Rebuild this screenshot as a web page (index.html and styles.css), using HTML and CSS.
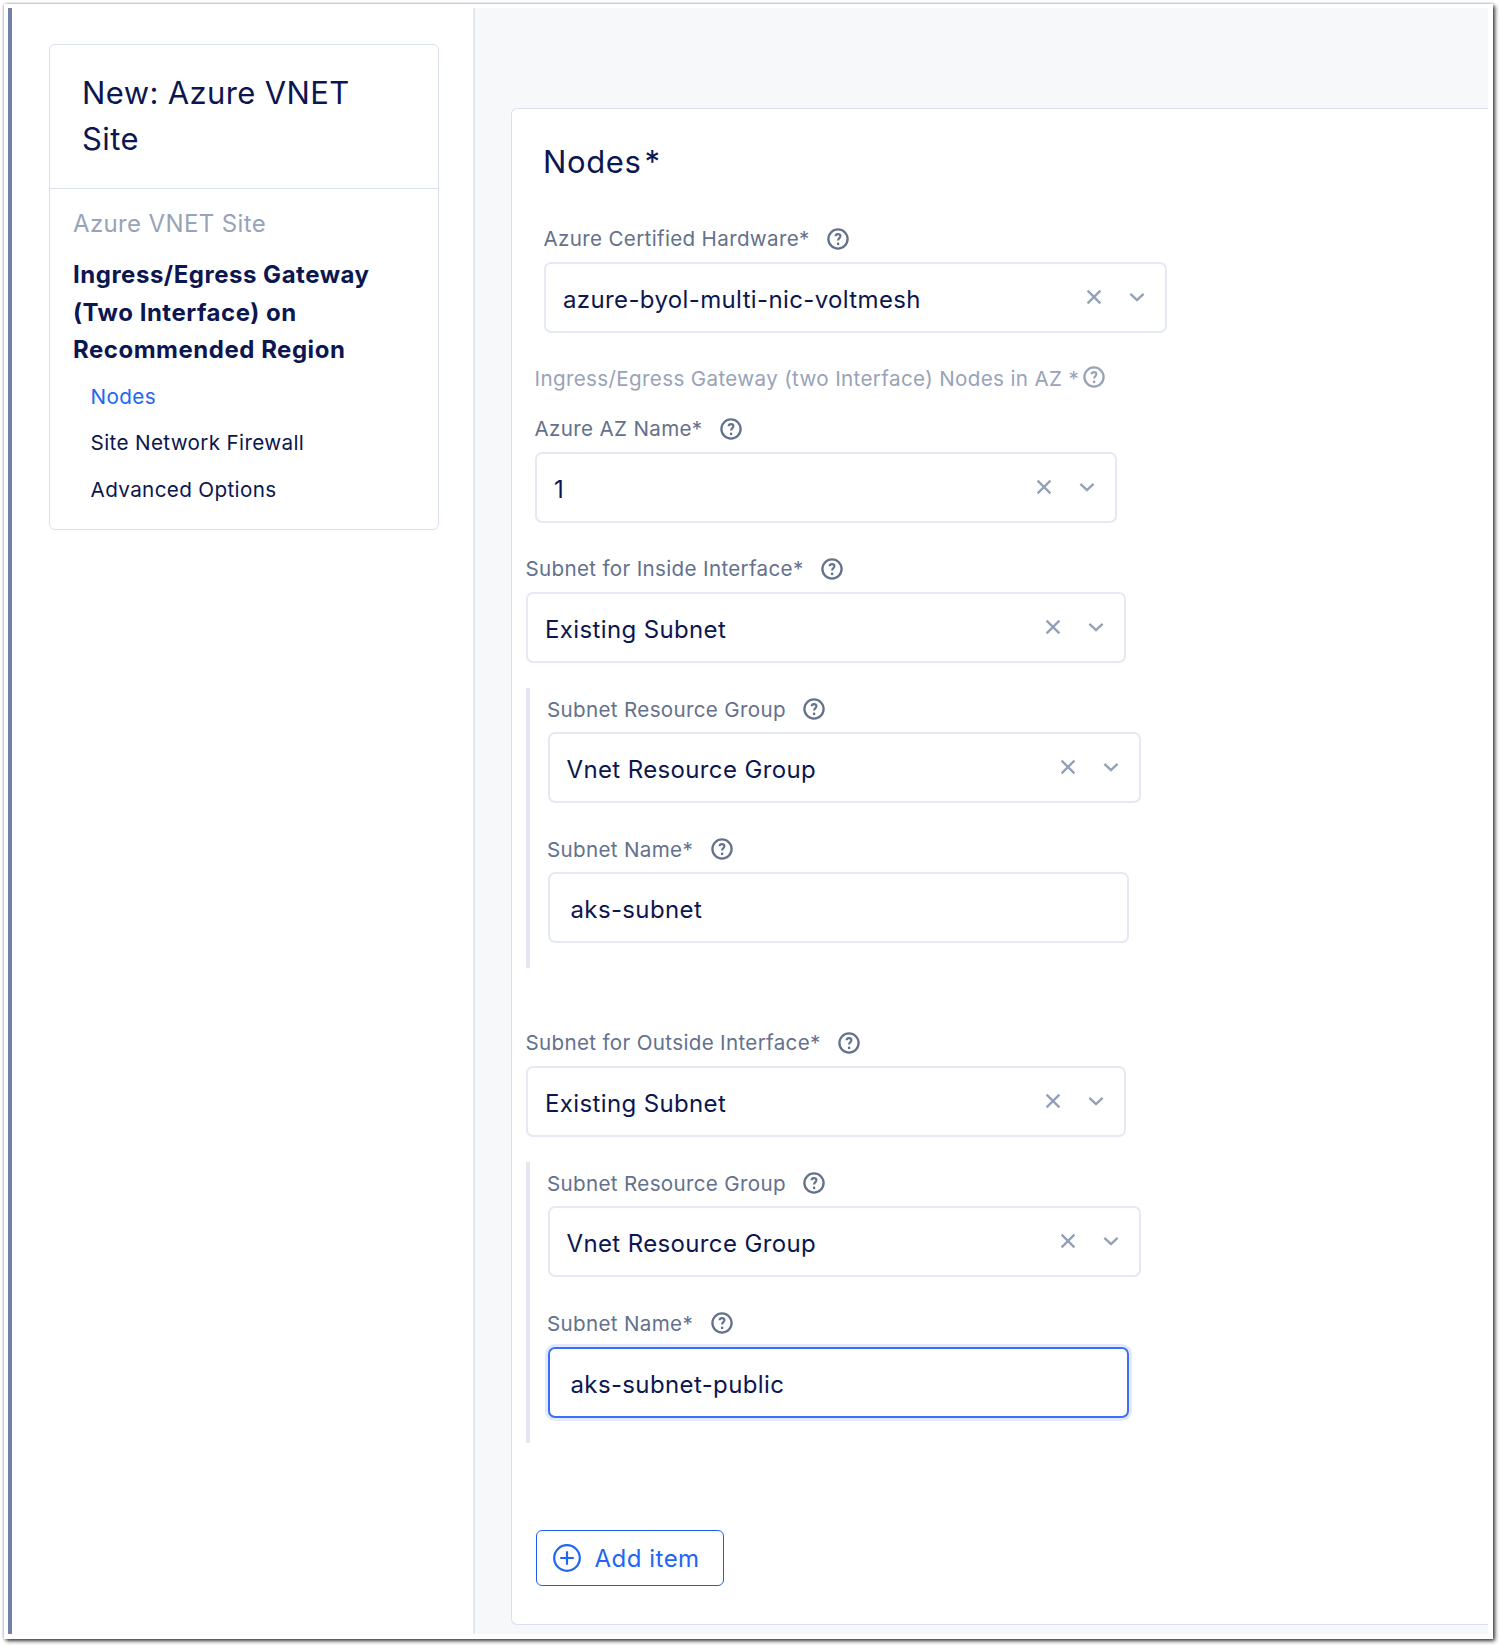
FILE: index.html
```html
<!DOCTYPE html>
<html lang="en">
<head>
<meta charset="utf-8">
<title>New: Azure VNET Site</title>
<link rel="stylesheet" href="styles.css">
</head>
<body>
<svg class="defs" aria-hidden="true">
  <symbol id="help" viewBox="0 0 22 22">
    <circle cx="11" cy="11" r="9.6" fill="none" stroke="currentColor" stroke-width="2.3"/>
    <path d="M8.6 8.3C8.7 6.9 9.7 6.1 11 6.1c1.4 0 2.4.8 2.4 2.1 0 1.9-2.3 2-2.3 4.3" fill="none" stroke="currentColor" stroke-width="2.1"/>
    <circle cx="11.1" cy="15.9" r="1.3" fill="currentColor"/>
  </symbol>
  <symbol id="clear" viewBox="0 0 16 16">
    <path d="M1.6 1.6l12.8 12.8M14.4 1.6L1.6 14.4" fill="none" stroke="currentColor" stroke-width="2.4"/>
  </symbol>
  <symbol id="chevron" viewBox="0 0 16 16">
    <path d="M1.4 4.8L8 11l6.6-6.2" fill="none" stroke="currentColor" stroke-width="2.4"/>
  </symbol>
</svg>
<div class="window">
  <aside class="sidebar">
    <div class="nav-card">
      <h1 class="nav-title">New: Azure VNET Site</h1>
      <nav class="nav-body">
        <div class="nav-parent">Azure VNET Site</div>
        <div class="nav-current">Ingress/Egress Gateway (Two Interface) on Recommended Region</div>
        <a class="nav-link active">Nodes</a>
        <a class="nav-link">Site Network Firewall</a>
        <a class="nav-link">Advanced Options</a>
      </nav>
    </div>
  </aside>
  <main class="content">
    <section class="panel">
      <h2 class="panel-title">Nodes<span class="req">*</span></h2>
      <div class="field level-1">
        <div class="label">Azure Certified Hardware*<svg class="help"><use href="#help"/></svg></div>
        <div class="select w-hardware"><span class="value">azure-byol-multi-nic-voltmesh</span><svg class="ctl"><use href="#clear"/></svg><svg class="ctl"><use href="#chevron"/></svg></div>
      </div>
      <div class="section-label">Ingress/Egress Gateway (two Interface) Nodes in AZ *<svg class="help"><use href="#help"/></svg></div>
      <div class="field level-2">
        <div class="label">Azure AZ Name*<svg class="help"><use href="#help"/></svg></div>
        <div class="select w-az"><span class="value">1</span><svg class="ctl"><use href="#clear"/></svg><svg class="ctl"><use href="#chevron"/></svg></div>
      </div>
      <div class="subnet">
        <div class="field">
          <div class="label">Subnet for Inside Interface*<svg class="help"><use href="#help"/></svg></div>
          <div class="select w-subnet"><span class="value">Existing Subnet</span><svg class="ctl"><use href="#clear"/></svg><svg class="ctl"><use href="#chevron"/></svg></div>
        </div>
        <div class="nested">
          <div class="field">
            <div class="label">Subnet Resource Group<svg class="help"><use href="#help"/></svg></div>
            <div class="select w-group"><span class="value">Vnet Resource Group</span><svg class="ctl"><use href="#clear"/></svg><svg class="ctl"><use href="#chevron"/></svg></div>
          </div>
          <div class="field">
            <div class="label">Subnet Name*<svg class="help"><use href="#help"/></svg></div>
            <div class="input"><span class="value">aks-subnet</span></div>
          </div>
        </div>
      </div>
      <div class="subnet">
        <div class="field">
          <div class="label">Subnet for Outside Interface*<svg class="help"><use href="#help"/></svg></div>
          <div class="select w-subnet"><span class="value">Existing Subnet</span><svg class="ctl"><use href="#clear"/></svg><svg class="ctl"><use href="#chevron"/></svg></div>
        </div>
        <div class="nested">
          <div class="field">
            <div class="label">Subnet Resource Group<svg class="help"><use href="#help"/></svg></div>
            <div class="select w-group"><span class="value">Vnet Resource Group</span><svg class="ctl"><use href="#clear"/></svg><svg class="ctl"><use href="#chevron"/></svg></div>
          </div>
          <div class="field">
            <div class="label">Subnet Name*<svg class="help"><use href="#help"/></svg></div>
            <div class="input focused"><span class="value">aks-subnet-public</span></div>
          </div>
        </div>
      </div>
      <button class="add" type="button">
        <svg class="plus" viewBox="0 0 28 28"><g fill="none" stroke="currentColor" stroke-width="2.2"><circle cx="14" cy="14" r="12.8"/><path d="M14 7.2v13.6M7.2 14h13.6"/></g></svg>
        Add item
      </button>
    </section>
  </main>
</div>
</body>
</html>
```
FILE: styles.css
```css
* { box-sizing: border-box; }
body {
  margin: 0;
  height: 1646px;
  padding: 4px 7px 7px 4px;
  overflow: hidden;
  background: #fff;
  color: #0c1650;
  font-family: Inter, "Liberation Sans", sans-serif;
  font-weight: 400;
}
.defs { display: none; }
.window {
  display: flex;
  height: 1635px;
  padding: 4px 5px 5px 4px;
  background: #fff;
  box-shadow: 0 0 3px rgba(0, 0, 0, .3), 2px 2px 4px rgba(0, 0, 0, .75);
}
.sidebar {
  flex: none;
  width: 467px;
  padding: 36px 34px 0 37px;
  border-left: 4px solid #7280a8;
  border-right: 2px solid #e3e7f3;
}
.nav-card {
  height: 486px;
  border: 1px solid #dbe0f0;
  border-radius: 6px;
}
.nav-title {
  height: 144px;
  margin: 0;
  padding: 25px 60px 0 32px;
  border-bottom: 1px solid #dbe0f0;
  font-size: 31px;
  font-weight: 400;
  line-height: 46.3px;
  letter-spacing: .38px;
}
.nav-body { padding: 16px 22px 0 23px; }
.nav-parent {
  color: #98a3b8;
  font-size: 24px;
  line-height: 37.3px;
  letter-spacing: .37px;
}
.nav-current {
  margin: 14px 0 14px;
  font-size: 24px;
  font-weight: 700;
  line-height: 37.3px;
  letter-spacing: .52px;
}
.nav-link {
  display: block;
  height: 46.2px;
  padding-left: 17.6px;
  font-size: 20.7px;
  line-height: 30px;
  letter-spacing: .33px;
}
.nav-link.active { color: #2265f5; }
.content {
  flex: 1;
  padding: 100px 0 9px 36px;
  background: #f7f8fa;
}
.panel {
  height: 1517px;
  padding: 30px 0 0 14px;
  background: #fff;
  border: 1px solid #dbe0f0;
  border-right: 0;
  border-radius: 6px 0 0 6px;
}
.panel-title {
  height: 78.8px;
  margin: 0 0 0 17px;
  font-size: 31px;
  font-weight: 400;
  line-height: 46px;
  letter-spacing: .62px;
}
.req { margin-left: 3px; }
.field { height: 140.2px; padding-top: 6px; }
.level-1 { margin-left: 18px; }
.level-2 { margin-left: 9px; }
.label, .section-label {
  display: flex;
  align-items: center;
  height: 30px;
  font-size: 20.6px;
  letter-spacing: .33px;
  white-space: nowrap;
}
.label { margin: 0 0 8.2px -.5px; color: #64718c; }
.section-label {
  height: 44.7px;
  margin: 0 0 5px 8.5px;
  padding-bottom: 4px;
  letter-spacing: .36px;
  color: #98a3b8;
}
.help { width: 22px; height: 22px; margin-left: 17.5px; }
.section-label .help { margin: -3px 0 0 4px; }
.select, .input {
  display: flex;
  align-items: center;
  height: 71px;
  border: 2px solid #e5e9f4;
  border-radius: 7px;
}
.select { padding: 0 20px 0 17px; }
.w-hardware { width: 623px; }
.w-az { width: 582px; }
.w-subnet { width: 600px; }
.w-group { width: 593px; }
.input { width: 581px; padding-left: 21px; }
.input.focused {
  border: 2px solid #3a70f7;
  box-shadow: 0 0 0 3px #e3eaff;
}
.value {
  flex: 1;
  padding-top: 4px;
  font-size: 24px;
  letter-spacing: .37px;
}
.ctl { width: 16px; height: 16px; margin: -1.5px 0 0 26.6px; color: #94a1b6; }
.nested {
  border-left: 4px solid #e3e7f3;
  padding-left: 17.5px;
}
.subnet { height: 474.1px; }
.add {
  display: flex;
  align-items: center;
  gap: 14px;
  width: 188px;
  height: 56px;
  margin: 34px 0 0 9.5px;
  padding: 0 0 0 16px;
  background: #fff;
  border: 1px solid #1f5bf5;
  border-radius: 6px;
  color: #2265f5;
  font: inherit;
  font-size: 24px;
  letter-spacing: .5px;
}
.plus { width: 28px; height: 28px; }
```
